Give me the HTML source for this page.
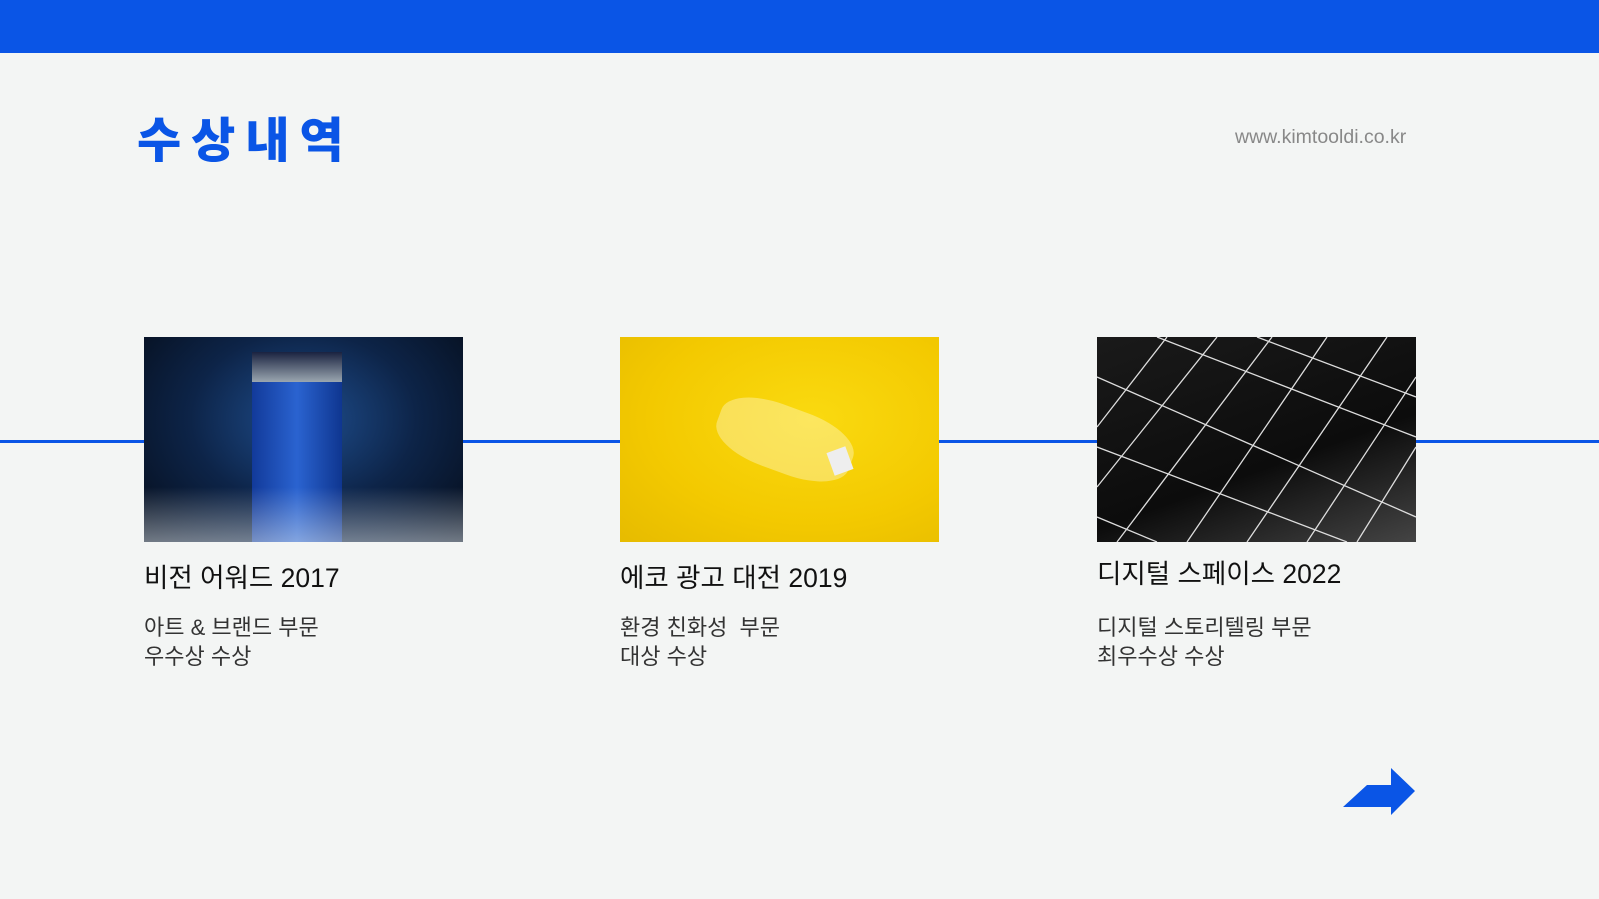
<!DOCTYPE html>
<html><head><meta charset="utf-8"><style>
*{margin:0;padding:0;box-sizing:border-box}
body{width:1599px;height:899px;background:#f3f5f4;position:relative;overflow:hidden;font-family:"Liberation Sans","Noto Sans CJK KR",sans-serif;color:#1a1a1a}
.bar{position:absolute;left:0;top:0;width:1599px;height:53px;background:#0a55e6}
.title{position:absolute;left:137px;top:112px;font-size:48px;font-weight:900;color:#0a55e6;letter-spacing:10px;line-height:60px}
.url{position:absolute;left:1235px;top:126px;font-size:19.5px;color:#888;line-height:22px}
.line{position:absolute;left:0;top:440px;width:1599px;height:3px;background:#0a55e6}
.img{position:absolute;top:337px;width:319px;height:205px;overflow:hidden}
.h{position:absolute;font-size:26.5px;line-height:34px;color:#111}
.s{position:absolute;font-size:22px;line-height:29px;color:#333}
</style></head><body>
<div class="bar"></div>
<div class="title">수상내역</div>
<div class="url">www.kimtooldi.co.kr</div>
<div class="line"></div>
<div class="img" style="left:144px;background:radial-gradient(ellipse at 50% 40%,#1f4f90 0%,#0d2448 50%,#050c18 100%)">
<div style="position:absolute;left:108px;top:15px;width:90px;height:190px;background:linear-gradient(90deg,#123a9a,#2a63d0 50%,#0f3690);"></div>
<div style="position:absolute;left:108px;top:15px;width:90px;height:30px;background:linear-gradient(#1a2240,#9aa6b0)"></div>
<div style="position:absolute;left:0;top:150px;width:319px;height:55px;background:linear-gradient(transparent,rgba(220,230,240,.5))"></div>
</div>
<div class="img" style="left:620px;background:radial-gradient(ellipse at 60% 40%,#fada10,#f3c900 60%,#e6bb00)">
<div style="position:absolute;left:95px;top:70px;width:140px;height:65px;border-radius:40%;background:rgba(255,255,240,.35);transform:rotate(20deg)"></div>
<div style="position:absolute;left:210px;top:112px;width:20px;height:24px;background:#eee;transform:rotate(-20deg)"></div>
</div>
<div class="img" style="left:1097px;background:linear-gradient(160deg,#1a1a1a,#0c0c0c 60%,#444)">
<svg width="319" height="205" viewBox="0 0 319 205" stroke="#ddd" stroke-width="1.3" fill="none">
<path d="M0 90 L70 0 M0 150 L120 0 M20 205 L175 0 M90 205 L230 0 M150 205 L290 0 M210 205 L319 40 M260 205 L319 110 M0 40 L319 180 M0 110 L250 205 M60 0 L319 100 M160 0 L319 60 M0 180 L60 205"/>
</svg>
</div>
<div class="h" style="left:144px;top:561px">비전 어워드 2017</div>
<div class="s" style="left:144px;top:613px">아트 &amp; 브랜드 부문<br>우수상 수상</div>
<div class="h" style="left:620px;top:561px">에코 광고 대전 2019</div>
<div class="s" style="left:620px;top:613px">환경 친화성&nbsp; 부문<br>대상 수상</div>
<div class="h" style="left:1097px;top:557px">디지털 스페이스 2022</div>
<div class="s" style="left:1097px;top:613px">디지털 스토리텔링 부문<br>최우수상 수상</div>
<svg style="position:absolute;left:1343px;top:768px" width="73" height="47" viewBox="0 0 73 47"><path d="M0 39 L24 17 L48 17 L48 0 L72 23 L48 47 L48 39 Z" fill="#0a55e6"/></svg>
</body></html>
